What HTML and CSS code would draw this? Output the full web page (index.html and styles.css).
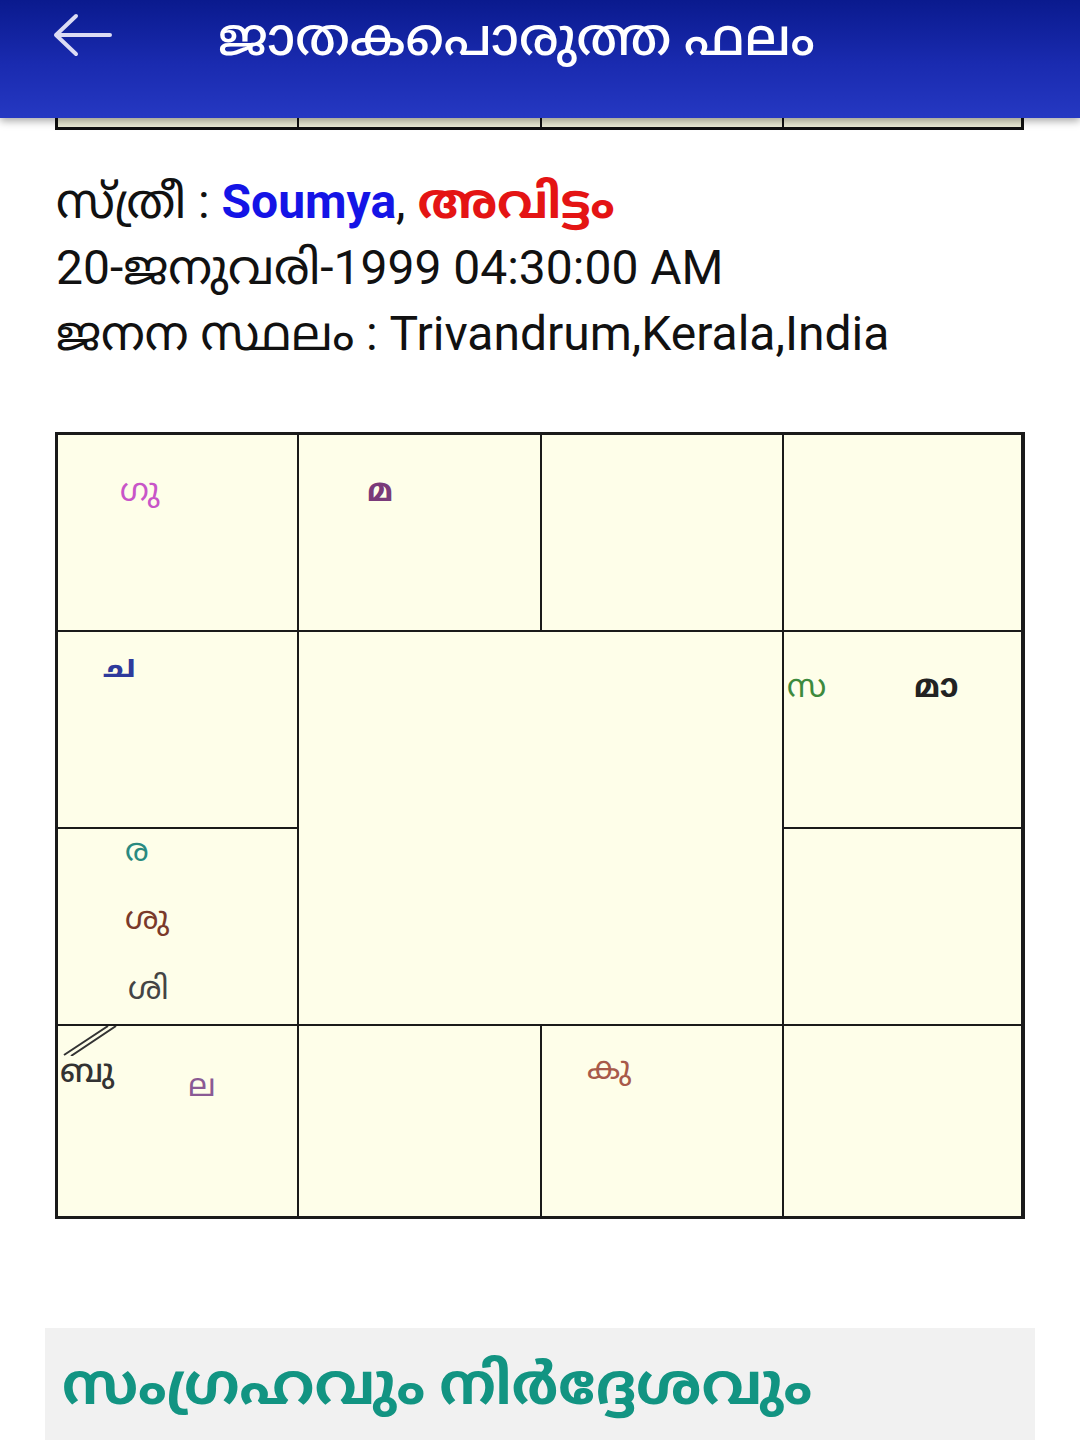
FILE: index.html
```html
<!DOCTYPE html>
<html lang="ml">
<head>
    <meta charset="UTF-8">
    <meta name="viewport" content="width=device-width, initial-scale=1.0">
    <title>ജാതകപൊരുത്ത ഫലം</title>
    <link rel="stylesheet" href="styles.css">
</head>
<body>
    <div class="app-bar">
        <svg class="back" width="62" height="44" viewBox="0 0 62 44">
            <path d="M4 22 H58 M24 3 L4 22 L24 41" fill="none" stroke="#dcdcf4" stroke-width="4" stroke-linecap="round" stroke-linejoin="round"/>
        </svg>
        <h1>ജാതകപൊരുത്ത ഫലം</h1>
    </div>

    <div class="content">
        <div class="chart-tail">
            <div></div><div></div><div></div><div></div>
        </div>

        <div class="details">
            <div>സ്ത്രീ : <span class="name">Soumya</span>, <span class="star">അവിട്ടം</span></div>
            <div>20-ജനുവരി-1999 04:30:00 AM</div>
            <div>ജനന സ്ഥലം : Trivandrum,Kerala,India</div>
        </div>

        <div class="chart">
            <div class="cell"><span class="p c-gu" style="left:62px;top:37px">ഗു</span></div>
            <div class="cell"><span class="p c-ma" style="left:68px;top:37px">മ</span></div>
            <div class="cell"></div>
            <div class="cell"></div>

            <div class="cell"><span class="p c-cha" style="left:45px;top:16px">ച</span></div>
            <div class="cell center"></div>
            <div class="cell">
                <span class="p c-sa" style="left:3px;top:36px">സ</span>
                <span class="p c-maa" style="left:130px;top:36px">മാ</span>
            </div>

            <div class="cell">
                <span class="p c-ra" style="left:67px;top:3px">ര</span>
                <span class="p c-shu" style="left:67px;top:71px">ശു</span>
                <span class="p c-shi" style="left:70px;top:141px">ശി</span>
            </div>
            <div class="cell"></div>

            <div class="cell">
                <svg class="retro" width="60" height="30" viewBox="0 0 60 30">
                    <path d="M2 29 L46 0 M9 30 L54 0" stroke="#333" stroke-width="2"/>
                </svg>
                <span class="p c-bu" style="left:2px;top:27px">ബു</span>
                <span class="p c-la" style="left:130px;top:41px">ല</span>
            </div>
            <div class="cell"></div>
            <div class="cell"><span class="p c-ku" style="left:45px;top:24px">കു</span></div>
            <div class="cell"></div>
        </div>

        <div class="summary">
            <h2>സംഗ്രഹവും നിർദ്ദേശവും</h2>
        </div>
    </div>
</body>
</html>
```

FILE: styles.css
```css
body {
    margin: 0;
    font-family: Roboto, "Noto Sans Malayalam", "Noto Sans", sans-serif;
    background: #ffffff;
    color: #111;
}
.app-bar {
    position: fixed;
    top: 0;
    left: 0;
    right: 0;
    height: 118px;
    display: flex;
    align-items: flex-start;
    background: linear-gradient(to bottom, #0a1a8e 0%, #1a2bb0 55%, #2538c2 100%);
    box-shadow: 0 3px 8px rgba(0, 0, 0, 0.35);
    z-index: 10;
}
.back {
    margin: 13px 0 0 52px;
}
.app-bar h1 {
    margin: 6px 0 0 104px;
    font-size: 52px;
    font-weight: 500;
    color: #fff;
    line-height: 64px;
}
.content {
    padding-top: 118px;
}
.chart-tail {
    margin: 0 56px 0 55px;
    height: 9px;
    display: grid;
    grid-template-columns: 239px 241px 240px 237px;
    gap: 2px;
    background: #111;
    padding: 0 3px 3px 3px;
}
.chart-tail div {
    background: #ebebd4;
}
.details {
    margin: 39px 0 0 56px;
    font-size: 48px;
    line-height: 66px;
}
.name {
    color: #1414e6;
    font-weight: bold;
}
.star {
    color: #e41414;
    font-weight: bold;
}
.chart {
    margin: 65px 55px 0 55px;
    display: grid;
    grid-template-columns: 239px 241px 240px 237px;
    grid-template-rows: 195px 195px 195px 190px;
    gap: 2px;
    padding: 3px;
    background: #1a1a1a;
}
.cell {
    position: relative;
    background: #fefee9;
}
.center {
    grid-column: span 2;
    grid-row: span 2;
}
.p {
    position: absolute;
    font-size: 32px;
    line-height: 36px;
}
.retro {
    position: absolute;
    left: 4px;
    top: 0;
}
.c-gu { color: #c855c8; }
.c-ma { color: #7a3a7a; font-weight: bold; }
.c-cha { color: #2e3a9c; font-weight: bold; }
.c-sa { color: #3d8a3d; }
.c-maa { color: #222; font-weight: bold; }
.c-ra { color: #2a8a80; }
.c-shu { color: #7a3a2a; }
.c-shi { color: #444; }
.c-bu { color: #333; font-weight: 500; }
.c-la { color: #8a5a94; }
.c-ku { color: #a85a4a; }
.summary {
    margin: 109px 45px 0 45px;
    background: #f1f1f1;
    padding: 20px 17px 40px 17px;
}
.summary h2 {
    margin: 0;
    font-size: 57px;
    line-height: 74px;
    font-weight: bold;
    color: #129482;
}
```
